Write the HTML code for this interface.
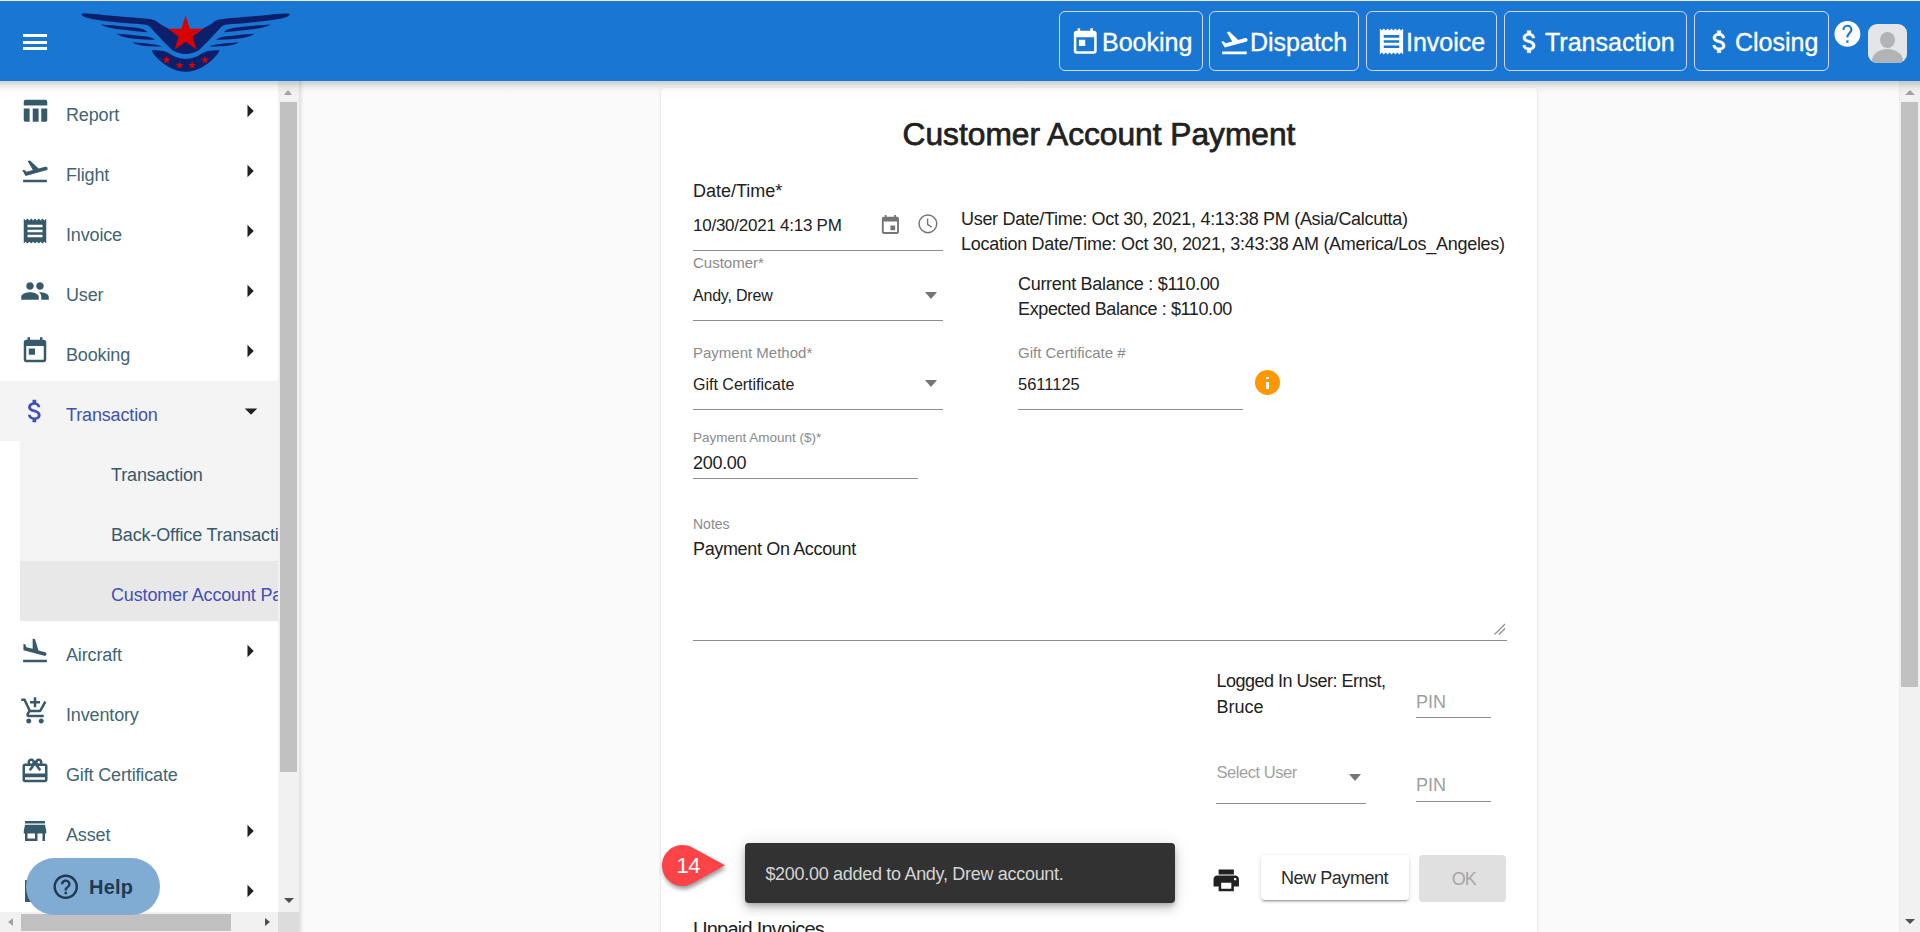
<!DOCTYPE html>
<html><head><meta charset="utf-8">
<style>
html,body{margin:0;padding:0}
body{width:1920px;height:932px;overflow:hidden;position:relative;background:#fafafa;font-family:"Liberation Sans",sans-serif;color:#212121}
.a{position:absolute}
.t{position:absolute;white-space:nowrap;line-height:1}
svg{display:block}
#topline{left:0;top:0;width:1920px;height:1px;background:#f0e9e1}
#hdr{left:0;top:1px;width:1920px;height:80px;background:#1976d2;z-index:5}
#hdrsh{left:0;top:81px;width:1920px;height:13px;background:linear-gradient(rgba(120,95,70,.25) 0,rgba(0,0,0,.17) 1px,rgba(0,0,0,.12) 3px,rgba(0,0,0,.06) 6px,rgba(0,0,0,.02) 9px,rgba(0,0,0,0) 13px);z-index:10}
.hb{position:absolute;top:10px;height:60px;border:1px solid #d2d6fb;border-radius:6px;box-sizing:border-box}
.ht{position:absolute;top:29px;font-size:25px;color:#fff;line-height:1;white-space:nowrap;-webkit-text-stroke:0.35px #fff}
#side{left:0;top:81px;width:278px;height:831px;background:#fff;overflow:hidden}
.st{font-size:18px;color:#416475;letter-spacing:-0.15px}
.si{position:absolute;width:30px;height:30px;left:20px}
.sa{position:absolute;width:30px;height:30px;left:235px}
</style></head>
<body>
<div id="topline" class="a"></div>
<div id="hdr" class="a">
  <!-- hamburger -->
  <div class="a" style="left:23px;top:32.8px;width:24px;height:3px;background:#fff"></div>
  <div class="a" style="left:23px;top:39.6px;width:24px;height:3px;background:#fff"></div>
  <div class="a" style="left:23px;top:46px;width:24px;height:3px;background:#fff"></div>

  <svg class="a" style="left:0;top:-1px" width="300" height="80" viewBox="0 0 300 80">
   <defs><polygon id="ss" points="0,-4.2 1,-1.3 4,-1.3 1.6,0.5 2.5,3.4 0,1.7 -2.5,3.4 -1.6,0.5 -4,-1.3 -1,-1.3"/></defs><g fill="#0c1f6b">
    <g id="lw">
     <path d="M81.4,14 C84,12.8 95,14 106,15.2 C120,16.4 140,17.8 152.3,19.4 C155.5,20 157.9,22.2 160,24 L168,28.5 L186.4,38 L186.4,54.1 L185.6,54.1 C183,54 181,53.6 180.2,53.2 C176,52 173.5,51 171.8,49.7 L162.8,40.7 L153,30.2 C151,28 149,25.4 146.7,25 C140,24 132,23.8 130,23.6 C115,22 98,20.5 88,18 C84,17 81.5,15.5 81.4,14 Z"/>
     <path d="M100.5,24.4 C108,24.8 125,26 137,27.8 C142,28.6 145,29.5 147.3,32.2 C140,31.8 132,30.8 128,30.2 C115,29 106,27.5 100.5,24.4 Z"/>
     <path d="M116.7,33.7 C125,34.2 140,35.5 148,36.8 C151,37.5 153.5,38.3 155,39.7 C148,39.6 140,39.2 136,38.9 C128,38 120,36.5 116.7,33.7 Z"/>
     <path d="M132.5,42.3 C140,42.8 150,43.8 155,44.6 C158,45.2 160.5,45.8 161.7,46.6 C155,46.6 148,46.2 145,46 C139,45.4 134.5,44 132.5,42.3 Z"/>
     <path d="M151.6,50.3 C155,50.2 160,50.4 163.5,51.1 C167,52 171,54.5 174.6,56.6 C178,58.2 182,58.9 186.4,58.9 L186.4,71.8 C180,71.8 173.5,69.8 169,67.2 C163,63.5 159,60 157.9,58.8 C155,56 152.5,53 151.6,50.3 Z"/>
    </g>
    <use href="#lw" transform="matrix(-1 0 0 1 371.2 0)"/>
   </g>
   <g fill="#d90000">
    <polygon points="185.60,15.60 189.84,28.66 203.57,28.66 192.47,36.73 196.71,49.79 185.60,41.72 174.49,49.79 178.73,36.73 167.63,28.66 181.36,28.66"/>
    
   </g>
   <g fill="#d90000">
    <use href="#ss" transform="translate(166.6,60)"/>
    <use href="#ss" transform="translate(179.5,65.2)"/>
    <use href="#ss" transform="translate(192.1,65.2)"/>
    <use href="#ss" transform="translate(205,60)"/>
   </g>
  </svg>
  <div class="hb" style="left:1059px;width:144px"></div>
  <svg class="a" style="left:1070px;top:26px" width="30.5" height="30.5" viewBox="0 0 24 24" fill="#fff"><path d="M19 3h-1V1h-2v2H8V1H6v2H5c-1.11 0-1.99.9-1.99 2L3 19c0 1.1.89 2 2 2h14c1.1 0 2-.9 2-2V5c0-1.1-.9-2-2-2zm0 16H5V8h14v11zM7 10h5v5H7z"/></svg>
  <div class="ht" style="left:1102px">Booking</div>
  <div class="hb" style="left:1209px;width:150px"></div>
  <svg class="a" style="left:1218.5px;top:25.5px" width="31" height="31" viewBox="0 0 24 24" fill="#fff"><path d="M2.5 19h19v2h-19zm19.57-9.36c-.21-.8-1.04-1.28-1.84-1.06L14.92 10l-6.9-6.43-1.93.51 4.14 7.17-4.97 1.33-1.97-1.54-1.45.39 2.59 4.49L21 11.49c.81-.23 1.28-1.05 1.07-1.85z"/></svg>
  <div class="ht" style="left:1250px">Dispatch</div>
  <div class="hb" style="left:1366px;width:131px"></div>
  <svg class="a" style="left:1376px;top:25px" width="31" height="31" viewBox="0 0 24 24" fill="#fff"><path d="M18 17H6v-2h12v2zm0-4H6v-2h12v2zm0-4H6V7h12v2zM3 22l1.5-1.5L6 22l1.5-1.5L9 22l1.5-1.5L12 22l1.5-1.5L15 22l1.5-1.5L18 22l1.5-1.5L21 22V2l-1.5 1.5L18 2l-1.5 1.5L15 2l-1.5 1.5L12 2l-1.5 1.5L9 2 7.5 3.5 6 2 4.5 3.5 3 2v20z"/></svg>
  <div class="ht" style="left:1406px">Invoice</div>
  <div class="hb" style="left:1504px;width:183px"></div>
  <svg class="a" style="left:1515px;top:26px" width="29.3" height="29.3" viewBox="0 0 24 24" fill="#fff" stroke="#fff" stroke-width="0.35"><path d="M11.8 10.9c-2.27-.59-3-1.2-3-2.15 0-1.090 1.010-1.850 2.700-1.850 1.780 0 2.440.85 2.500 2.100h2.210c-.07-1.720-1.120-3.300-3.210-3.810V3h-3v2.160c-1.940.42-3.500 1.680-3.500 3.610 0 2.310 1.910 3.460 4.700 4.130 2.500.6 3 1.480 3 2.410 0 .69-.49 1.790-2.700 1.790-2.060 0-2.870-.92-2.980-2.100h-2.200c.12 2.190 1.760 3.420 3.680 3.830V21h3v-2.150c1.950-.37 3.500-1.500 3.500-3.550 0-2.840-2.430-3.810-4.700-4.400z"/></svg>
  <div class="ht" style="left:1545px">Transaction</div>
  <div class="hb" style="left:1694px;width:135px"></div>
  <svg class="a" style="left:1705px;top:26px" width="29.3" height="29.3" viewBox="0 0 24 24" fill="#fff" stroke="#fff" stroke-width="0.35"><path d="M11.8 10.9c-2.27-.59-3-1.2-3-2.15 0-1.090 1.010-1.850 2.700-1.850 1.780 0 2.440.85 2.500 2.100h2.210c-.07-1.720-1.120-3.300-3.210-3.810V3h-3v2.160c-1.940.42-3.500 1.680-3.500 3.610 0 2.310 1.910 3.460 4.700 4.130 2.500.6 3 1.480 3 2.410 0 .69-.49 1.790-2.700 1.790-2.060 0-2.870-.92-2.980-2.100h-2.200c.12 2.190 1.760 3.420 3.680 3.830V21h3v-2.150c1.950-.37 3.500-1.500 3.500-3.550 0-2.840-2.430-3.810-4.700-4.400z"/></svg>
  <div class="ht" style="left:1735px">Closing</div>
  <svg class="a" style="left:0;top:-1px" width="1920" height="80" viewBox="0 0 1920 80"><circle cx="1847.4" cy="33.9" r="12.9" fill="#fff"/><path d="M1843.4,30 C1843.4,27.6 1845.2,25.8 1847.4,25.8 C1849.6,25.8 1851.4,27.5 1851.4,29.7 C1851.4,32.6 1847.3,33.6 1847.3,37.4" fill="none" stroke="#1976d2" stroke-width="2.1"/><rect x="1846.2" y="40.4" width="2.3" height="2.4" fill="#1976d2"/></svg>
  <div class="a" style="left:1868px;top:23px;width:39px;height:39px;border-radius:9px;background:#e4e5e7;overflow:hidden">
    <div class="a" style="left:12px;top:7.5px;width:15.3px;height:16.5px;border-radius:50%;background:#b1b4b7"></div>
    <div class="a" style="left:4px;top:25px;width:31px;height:24px;border-radius:50%;background:#b1b4b7"></div>
  </div>
</div>
<div id="hdrsh" class="a"></div>

<div id="side" class="a">
<svg class="si" style="top:15px" viewBox="0 0 24 24" fill="#375a6b"><path d="M3 4.5c0-.8.7-1.5 1.5-1.5h15.8c.8 0 1.5.7 1.5 1.5v3.1H3z M3 9.9h4.7v10.7H4.5c-.8 0-1.5-.7-1.5-1.5z M10.2 9.9h4.7v10.7h-4.7z M17 9.9h4.8v9.2c0 .8-.7 1.5-1.5 1.5H17z"/></svg>
<div class="t st" style="left:66px;top:24.8px">Report</div>
<svg class="sa" style="top:15px" viewBox="0 0 24 24" fill="#212121"><path d="M10 17l5-5-5-5v10z"/></svg>
<svg class="si" style="top:75px" viewBox="0 0 24 24" fill="#375a6b"><path d="M2.5 19h19v2h-19v-2zm19.57-9.36c-.21-.8-1.04-1.28-1.84-1.06L14.92 10l-6.9-6.43-1.93.51 4.14 7.17-4.97 1.33-1.97-1.54-1.45.39 2.59 4.49L21 11.49c.81-.23 1.28-1.05 1.07-1.85z"/></svg>
<div class="t st" style="left:66px;top:84.8px">Flight</div>
<svg class="sa" style="top:75px" viewBox="0 0 24 24" fill="#212121"><path d="M10 17l5-5-5-5v10z"/></svg>
<svg class="si" style="top:135px" viewBox="0 0 24 24" fill="#375a6b"><path d="M18 17H6v-2h12v2zm0-4H6v-2h12v2zm0-4H6V7h12v2zM3 22l1.5-1.5L6 22l1.5-1.5L9 22l1.5-1.5L12 22l1.5-1.5L15 22l1.5-1.5L18 22l1.5-1.5L21 22V2l-1.5 1.5L18 2l-1.5 1.5L15 2l-1.5 1.5L12 2l-1.5 1.5L9 2 7.5 3.5 6 2 4.5 3.5 3 2v20z"/></svg>
<div class="t st" style="left:66px;top:144.8px">Invoice</div>
<svg class="sa" style="top:135px" viewBox="0 0 24 24" fill="#212121"><path d="M10 17l5-5-5-5v10z"/></svg>
<svg class="si" style="top:195px" viewBox="0 0 24 24" fill="#375a6b"><path d="M16 11c1.66 0 2.99-1.34 2.99-3S17.66 5 16 5c-1.66 0-3 1.34-3 3s1.34 3 3 3zm-8 0c1.66 0 2.99-1.34 2.99-3S9.66 5 8 5C6.34 5 5 6.34 5 8s1.34 3 3 3zm0 2c-2.33 0-7 1.17-7 3.5V19h14v-2.5c0-2.33-4.67-3.5-7-3.5zm8 0c-.29 0-.62.02-.97.05 1.16.84 1.97 1.97 1.97 3.45V19h6v-2.5c0-2.33-4.670-3.500-7-3.500z"/></svg>
<div class="t st" style="left:66px;top:204.8px">User</div>
<svg class="sa" style="top:195px" viewBox="0 0 24 24" fill="#212121"><path d="M10 17l5-5-5-5v10z"/></svg>
<svg class="si" style="top:255px" viewBox="0 0 24 24" fill="#375a6b"><path d="M19 3h-1V1h-2v2H8V1H6v2H5c-1.11 0-1.99.9-1.99 2L3 19c0 1.1.89 2 2 2h14c1.1 0 2-.9 2-2V5c0-1.1-.9-2-2-2zm0 16H5V8h14v11zM7 10h5v5H7z"/></svg>
<div class="t st" style="left:66px;top:264.8px">Booking</div>
<svg class="sa" style="top:255px" viewBox="0 0 24 24" fill="#212121"><path d="M10 17l5-5-5-5v10z"/></svg>
<div class="a" style="left:0;top:300px;width:278px;height:60px;background:#f4f4f4"></div>
<div class="a" style="left:20px;top:360px;width:258px;height:180px;background:#f4f4f4"></div>
<div class="a" style="left:20px;top:480px;width:258px;height:60px;background:#e8e8e8"></div>
<svg class="si" style="top:315px" viewBox="0 0 24 24" fill="#3f51b5"><path d="M11.8 10.9c-2.27-.59-3-1.2-3-2.15 0-1.09 1.01-1.85 2.7-1.85 1.78 0 2.44.85 2.5 2.1h2.21c-.07-1.72-1.12-3.3-3.21-3.81V3h-3v2.16c-1.94.42-3.5 1.68-3.5 3.61 0 2.31 1.91 3.46 4.7 4.13 2.5.6 3 1.48 3 2.41 0 .69-.49 1.79-2.7 1.79-2.06 0-2.87-.92-2.98-2.1h-2.2c.12 2.19 1.76 3.42 3.68 3.83V21h3v-2.15c1.95-.37 3.5-1.5 3.5-3.55 0-2.84-2.43-3.81-4.7-4.4z"/></svg>
<div class="t st" style="left:66px;top:324.8px;color:#3f51b5">Transaction</div>
<svg class="sa" style="top:315px;left:236px" viewBox="0 0 24 24" fill="#212121"><path d="M7 10l5 5 5-5z"/></svg>
<div class="t st" style="left:111px;top:384.8px;color:#375a6b">Transaction</div>
<div class="t st" style="left:111px;top:444.8px;color:#375a6b">Back-Office Transaction</div>
<div class="t st" style="left:111px;top:504.8px;color:#3f51b5">Customer Account Payment</div>
<svg class="si" style="top:555px" viewBox="0 0 24 24" fill="#375a6b"><path d="M2.5 19h19v2h-19v-2zm7.18-5.73l4.35 1.16 5.31 1.42c.8.21 1.62-.26 1.84-1.06.21-.8-.26-1.62-1.06-1.84l-5.31-1.42-2.76-9.02L10.12 2v8.28L5.15 8.95l-.93-2.32-1.45-.39v5.17l1.6.43 5.31 1.43z"/></svg>
<div class="t st" style="left:66px;top:564.8px">Aircraft</div>
<svg class="sa" style="top:555px" viewBox="0 0 24 24" fill="#212121"><path d="M10 17l5-5-5-5v10z"/></svg>
<svg class="si" style="top:615px" viewBox="0 0 24 24" fill="#375a6b"><path d="M11 9h2V6h3V4h-3V1h-2v3H8v2h3v3zm-4 9c-1.1 0-1.99.9-1.99 2S5.9 22 7 22s2-.9 2-2-.9-2-2-2zm10 0c-1.1 0-1.99.9-1.99 2s.89 2 1.99 2 2-.9 2-2-.9-2-2-2zm-9.83-3.25l.03-.12.9-1.63h7.45c.75 0 1.41-.41 1.75-1.03l3.86-7.01L19.42 4h-.01l-1.1 2-2.76 5H8.53l-.13-.27L6.16 6l-.95-2-.94-2H1v2h2l3.6 7.59-1.35 2.45c-.16.28-.25.61-.25.96 0 1.1.9 2 2 2h12v-2H7.42c-.13 0-.25-.11-.25-.25z"/></svg>
<div class="t st" style="left:66px;top:624.8px">Inventory</div>
<svg class="si" style="top:675px" viewBox="0 0 24 24" fill="#375a6b"><path d="M20 6h-2.18c.11-.31.18-.65.18-1 0-1.66-1.34-3-3-3-1.05 0-1.96.54-2.5 1.35l-.5.67-.5-.68C10.96 2.54 10.05 2 9 2 7.34 2 6 3.34 6 5c0 .35.07.69.18 1H4c-1.11 0-1.99.89-1.99 2L2 19c0 1.11.89 2 2 2h16c1.11 0 2-.89 2-2V8c0-1.11-.89-2-2-2zm-5-2c.55 0 1 .45 1 1s-.45 1-1 1-1-.45-1-1 .45-1 1-1zM9 4c.55 0 1 .45 1 1s-.45 1-1 1-1-.45-1-1 .45-1 1-1zm11 15H4v-2h16v2zm0-5H4V8h5.08L7 10.83 8.62 12 11 8.76l1-1.36 1 1.36L15.38 12 17 10.83 14.92 8H20v6z"/></svg>
<div class="t st" style="left:66px;top:684.8px">Gift Certificate</div>
<svg class="si" style="top:735px" viewBox="0 0 24 24" fill="#375a6b"><path d="M20 4H4v2h16V4zm1 10v-2l-1-5H4l-1 5v2h1v6h10v-6h4v6h2v-6h1zm-9 4H6v-4h6v4z"/></svg>
<div class="t st" style="left:66px;top:744.8px">Asset</div>
<svg class="sa" style="top:735px" viewBox="0 0 24 24" fill="#212121"><path d="M10 17l5-5-5-5v10z"/></svg>
<div class="a" style="left:25.3px;top:799px;width:12px;height:21.6px;background:#375a6b"></div>
<svg class="sa" style="top:795px" viewBox="0 0 24 24" fill="#212121"><path d="M10 17l5-5-5-5v10z"/></svg>
</div>

<div class="a" style="left:278px;top:81px;width:21px;height:831px;background:#f1f1f1"></div>
<div class="a" style="left:280px;top:102px;width:17px;height:670px;background:#c1c1c1"></div>
<div class="a" style="left:283.5px;top:90px;width:0;height:0;border-left:4.8px solid transparent;border-right:4.8px solid transparent;border-bottom:5px solid #a3a3a3"></div>
<div class="a" style="left:283.5px;top:898px;width:0;height:0;border-left:5px solid transparent;border-right:5px solid transparent;border-top:5.5px solid #505050"></div>
<div class="a" style="left:0;top:912px;width:278px;height:20px;background:#f1f1f1"></div>
<div class="a" style="left:21px;top:914px;width:210px;height:17px;background:#c1c1c1"></div>
<div class="a" style="left:8px;top:918px;width:0;height:0;border-top:4.5px solid transparent;border-bottom:4.5px solid transparent;border-right:5.5px solid #a3a3a3"></div>
<div class="a" style="left:265px;top:918px;width:0;height:0;border-top:4.5px solid transparent;border-bottom:4.5px solid transparent;border-left:5.5px solid #505050"></div>
<div class="a" style="left:278px;top:912px;width:21px;height:20px;background:#dcdcdc"></div>
<div class="a" style="left:299px;top:81px;width:2px;height:851px;background:#e4e4e4"></div><div class="a" style="left:301px;top:81px;width:3px;height:851px;background:linear-gradient(90deg,#ececec,#fafafa)"></div>
<div class="a" style="left:1899px;top:81px;width:21px;height:851px;background:#f1f1f1;border-left:1px solid #ebebeb;box-sizing:border-box"></div>
<div class="a" style="left:1901px;top:102px;width:17px;height:585px;background:#c1c1c1"></div>
<div class="a" style="left:1904.5px;top:89.5px;width:0;height:0;border-left:5px solid transparent;border-right:5px solid transparent;border-bottom:5.5px solid #a3a3a3"></div>
<div class="a" style="left:1904.5px;top:918.5px;width:0;height:0;border-left:5px solid transparent;border-right:5px solid transparent;border-top:5.5px solid #505050"></div>
<div class="a" style="left:661px;top:88px;width:876px;height:900px;background:#fff;border-radius:4px;box-shadow:0 2px 1px -1px rgba(0,0,0,.2),0 1px 1px 0 rgba(0,0,0,.14),0 1px 3px 0 rgba(0,0,0,.12)"></div>
<div class="t" style="left:661px;width:876px;text-align:center;top:118.6px;font-size:31.7px;font-weight:normal;letter-spacing:0px;-webkit-text-stroke:0.75px #212121">Customer Account Payment</div>
<div class="t" style="left:693px;top:182.0px;font-size:18px;color:#212121;">Date/Time*</div>
<div class="t" style="left:693px;top:216.7px;font-size:17px;color:#212121;letter-spacing:-0.25px">10/30/2021 4:13 PM</div>
<svg class="a" style="left:879.2px;top:213.5px" width="22.8" height="22.8" viewBox="0 0 24 24" fill="#757575"><path d="M17 12h-5v5h5v-5zM16 1v2H8V1H6v2H5c-1.11 0-1.99.9-1.99 2L3 19c0 1.1.89 2 2 2h14c1.1 0 2-.9 2-2V5c0-1.1-.9-2-2-2h-1V1h-2zm3 18H5V8h14v11z"/></svg>
<svg class="a" style="left:900px;top:200px" width="50" height="40" viewBox="900 200 50 40"><circle cx="927.9" cy="223.85" r="8.85" fill="none" stroke="#757575" stroke-width="1.45"/><path d="M927.6 218.6V224.3L931.6 227.1" fill="none" stroke="#757575" stroke-width="1.35"/></svg>
<div class="a" style="left:693px;top:250px;width:250px;height:1px;background:#8e8e8e"></div>
<div class="t" style="left:961px;top:210.0px;font-size:18px;color:#212121;letter-spacing:-0.3px">User Date/Time: Oct 30, 2021, 4:13:38 PM (Asia/Calcutta)</div>
<div class="t" style="left:961px;top:235.3px;font-size:18px;color:#212121;letter-spacing:-0.27px">Location Date/Time: Oct 30, 2021, 3:43:38 AM (America/Los_Angeles)</div>
<div class="t" style="left:693px;top:255.1px;font-size:15px;color:#8a8a8a">Customer*</div>
<div class="t" style="left:693px;top:287.5px;font-size:16px;color:#212121;letter-spacing:-0.2px">Andy, Drew</div>
<div class="a" style="left:924.7px;top:292px;width:0;height:0;border-left:6.65px solid transparent;border-right:6.65px solid transparent;border-top:7.30px solid #757575"></div>
<div class="a" style="left:693px;top:320px;width:250px;height:1px;background:#8e8e8e"></div>
<div class="t" style="left:1018px;top:274.5px;font-size:18px;color:#212121;letter-spacing:-0.3px">Current Balance : $110.00</div>
<div class="t" style="left:1018px;top:299.8px;font-size:18px;color:#212121;letter-spacing:-0.38px">Expected Balance : $110.00</div>
<div class="t" style="left:693px;top:344.9px;font-size:15px;color:#8a8a8a">Payment Method*</div>
<div class="t" style="left:693px;top:376.7px;font-size:16px;color:#212121;letter-spacing:0px">Gift Certificate</div>
<div class="a" style="left:924.8px;top:379.6px;width:0;height:0;border-left:6.90px solid transparent;border-right:6.90px solid transparent;border-top:7.70px solid #757575"></div>
<div class="a" style="left:693px;top:409px;width:250px;height:1px;background:#8e8e8e"></div>
<div class="t" style="left:1018px;top:344.9px;font-size:15px;color:#8a8a8a">Gift Certificate #</div>
<div class="t" style="left:1018px;top:376.2px;font-size:16.5px;color:#212121">5611125</div>
<div class="a" style="left:1018px;top:409px;width:225px;height:1px;background:#8e8e8e"></div>
<div class="a" style="left:1255.2px;top:370.4px;width:24.8px;height:24.8px;border-radius:50%;background:#ff9800"></div>
<div class="a" style="left:1266px;top:376.9px;width:3.2px;height:2.3px;background:#fff"></div>
<div class="a" style="left:1266px;top:382px;width:3.2px;height:7.2px;background:#fff"></div>
<div class="t" style="left:693px;top:431.2px;font-size:13.5px;color:#8a8a8a;">Payment Amount ($)*</div>
<div class="t" style="left:693px;top:453.8px;font-size:18px;color:#212121;letter-spacing:-0.3px">200.00</div>
<div class="a" style="left:693px;top:478px;width:225px;height:1px;background:#8e8e8e"></div>
<div class="t" style="left:693px;top:517.4px;font-size:14px;color:#8a8a8a;">Notes</div>
<div class="t" style="left:693px;top:539.6px;font-size:18px;color:#212121;letter-spacing:-0.35px">Payment On Account</div>
<svg class="a" style="left:1493px;top:623px" width="14" height="13" viewBox="0 0 14 13"><path d="M1.5 11.5L12 1M6 11.5L12 5.5" stroke="#8a8a8a" stroke-width="1.1"/></svg>
<div class="a" style="left:693px;top:640px;width:814px;height:1px;background:#8e8e8e"></div>
<div class="t" style="left:1216.5px;top:672.4px;font-size:18px;color:#212121;letter-spacing:-0.5px">Logged In User: Ernst,</div>
<div class="t" style="left:1216.5px;top:697.6px;font-size:18px;color:#212121;">Bruce</div>
<div class="t" style="left:1416px;top:692.6px;font-size:18px;color:#9e9e9e;">PIN</div>
<div class="a" style="left:1416px;top:717px;width:75px;height:1px;background:#8e8e8e"></div>
<div class="t" style="left:1216.5px;top:764.0px;font-size:16.5px;color:#a0a0a0;letter-spacing:-0.45px">Select User</div>
<div class="a" style="left:1348.5px;top:773.5px;width:0;height:0;border-left:6.65px solid transparent;border-right:6.65px solid transparent;border-top:7.40px solid #757575"></div>
<div class="a" style="left:1216px;top:803px;width:150px;height:1px;background:#8e8e8e"></div>
<div class="t" style="left:1416px;top:775.5px;font-size:18px;color:#9e9e9e;">PIN</div>
<div class="a" style="left:1416px;top:801px;width:75px;height:1px;background:#8e8e8e"></div>
<svg class="a" style="left:1210.8px;top:866.4px" width="30.5" height="28.8" viewBox="0 0 24 24" preserveAspectRatio="none" fill="#212121"><path d="M19 8H5c-1.66 0-3 1.34-3 3v6h4v4h12v-4h4v-6c0-1.66-1.34-3-3-3zm-3 11H8v-5h8v5zm3-7c-.55 0-1-.45-1-1s.45-1 1-1 1 .45 1 1-.45 1-1 1zm-1-9H6v4h12V3z"/></svg>
<div class="a" style="left:1261px;top:855px;width:148px;height:45px;background:#fff;border-radius:4px;box-shadow:0 3px 1px -2px rgba(0,0,0,.2),0 2px 2px 0 rgba(0,0,0,.14),0 1px 5px 0 rgba(0,0,0,.12)"></div>
<div class="t" style="left:1281px;top:869.0px;font-size:18px;color:#2a2a2a;letter-spacing:-0.45px">New Payment</div>
<div class="a" style="left:1419px;top:855px;width:87px;height:46.5px;background:#e0e0e0;border-radius:4px"></div>
<div class="t" style="left:1451.7px;top:869.8px;font-size:18px;color:#a6a6a6;letter-spacing:-1px">OK</div>
<div class="t" style="left:693px;top:919.1px;font-size:20px;color:#212121;letter-spacing:-0.75px">Unpaid Invoices</div>
<div class="a" style="left:745px;top:843px;width:430px;height:59.5px;background:#323232;border-radius:4px;box-shadow:0 3px 5px -1px rgba(0,0,0,.2),0 6px 10px 0 rgba(0,0,0,.14),0 1px 18px 0 rgba(0,0,0,.12)"></div>
<div class="t" style="left:765.4px;top:864.6px;font-size:18px;color:#d5d5d5;letter-spacing:-0.3px">$200.00 added to Andy, Drew account.</div>
<svg class="a" style="left:655px;top:838px;filter:drop-shadow(1px 3px 2px rgba(0,0,0,.4))" width="80" height="56" viewBox="655 838 80 56"><path d="M725,865.3 L692.3,847.5 A20.5,20.5 0 1 0 692.3,883.5 Z" fill="#fc4347"/></svg>
<div class="t" style="left:676.6px;top:855.4px;font-size:22px;color:#fff;letter-spacing:-0.5px">14</div>
<div class="a" style="left:26px;top:858px;width:134px;height:57px;border-radius:29px;background:#80acd4;z-index:6"></div>
<svg class="a" style="left:50.7px;top:871.7px;z-index:7" width="29.5" height="29.5" viewBox="0 0 24 24" fill="#1f3a52"><path d="M11 18h2v-2h-2v2zm1-16C6.48 2 2 6.48 2 12s4.48 10 10 10 10-4.48 10-10S17.52 2 12 2zm0 18c-4.41 0-8-3.59-8-8s3.590-8 8-8 8 3.59 8 8-3.59 8-8 8zm0-14c-2.21 0-4 1.79-4 4h2c0-1.1.9-2 2-2s2 .9 2 2c0 2-3 1.75-3 5h2c0-2.25 3-2.5 3-5 0-2.21-1.79-4-4-4z"/></svg>
<div class="t" style="left:89px;top:877.1px;font-size:20px;color:#1f3a52;font-weight:bold;z-index:7;letter-spacing:0.2px">Help</div>
</body></html>
